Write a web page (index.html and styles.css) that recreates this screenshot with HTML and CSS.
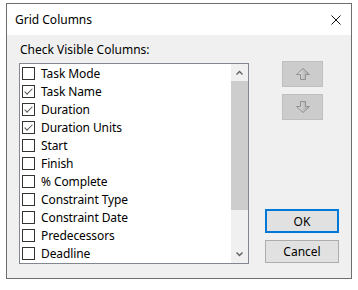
FILE: index.html
```html
<!DOCTYPE html>
<html lang="en">
<head>
    <meta charset="UTF-8">
    <title>Grid Columns</title>
    <link rel="stylesheet" href="styles.css">
</head>
<body>
    <div class="window">
        <div class="titlebar">
            <span class="title">Grid Columns</span>
            <svg class="close" width="10" height="10" viewBox="0 0 10 10">
                <path d="M0.5 0.5 L9.5 9.5 M9.5 0.5 L0.5 9.5" stroke="#111" stroke-width="1" fill="none"/>
            </svg>
        </div>
        <div class="content">
            <div class="left">
                <div class="label">Check Visible Columns:</div>
                <div class="listbox">
                    <ul class="items">
                        <li><span class="cb"></span>Task Mode</li>
                        <li><span class="cb checked"></span>Task Name</li>
                        <li><span class="cb checked"></span>Duration</li>
                        <li><span class="cb checked"></span>Duration Units</li>
                        <li><span class="cb"></span>Start</li>
                        <li><span class="cb"></span>Finish</li>
                        <li><span class="cb"></span>% Complete</li>
                        <li><span class="cb"></span>Constraint Type</li>
                        <li><span class="cb"></span>Constraint Date</li>
                        <li><span class="cb"></span>Predecessors</li>
                        <li><span class="cb"></span>Deadline</li>
                    </ul>
                    <div class="scrollbar">
                        <div class="sb-arrow">
                            <svg width="7" height="5" viewBox="0 0 7 5"><path d="M0.5 4.5 L3.5 1.5 L6.5 4.5" stroke="#606060" stroke-width="1.4" fill="none"/></svg>
                        </div>
                        <div class="sb-thumb"></div>
                        <div class="sb-track"></div>
                        <div class="sb-arrow">
                            <svg width="7" height="5" viewBox="0 0 7 5"><path d="M0.5 0.5 L3.5 3.5 L6.5 0.5" stroke="#606060" stroke-width="1.4" fill="none"/></svg>
                        </div>
                    </div>
                </div>
            </div>
            <div class="right">
                <div class="move-btn">
                    <svg width="14" height="12" viewBox="0 0 14 12">
                        <defs>
                            <linearGradient id="upfill" x1="0" y1="0" x2="1" y2="0">
                                <stop offset="0" stop-color="#e4e4e4"/>
                                <stop offset="1" stop-color="#a6a6a6"/>
                            </linearGradient>
                        </defs>
                        <path d="M7 0.5 L13.5 6.5 L9.5 6.5 L9.5 11.5 L4.5 11.5 L4.5 6.5 L0.5 6.5 Z" fill="url(#upfill)" stroke="#909090"/>
                    </svg>
                </div>
                <div class="move-btn down">
                    <svg width="14" height="12" viewBox="0 0 14 12">
                        <path d="M7 11.5 L13.5 5.5 L9.5 5.5 L9.5 0.5 L4.5 0.5 L4.5 5.5 L0.5 5.5 Z" fill="url(#upfill)" stroke="#909090"/>
                    </svg>
                </div>
                <div class="btn ok">OK</div>
                <div class="btn cancel">Cancel</div>
            </div>
        </div>
    </div>
</body>
</html>
```

FILE: styles.css
```css
body {
    margin: 0;
    background-color: #ffffff;
    font-family: "Noto Sans", "Open Sans", sans-serif;
    font-size: 12px;
    color: #000;
}
.window {
    margin: 3px 0 0 6px;
    width: 344px;
    border: 1px solid #6e6e6e;
    background-color: #f0f0f0;
}
.titlebar {
    height: 31px;
    background-color: #ffffff;
    display: flex;
    align-items: center;
    justify-content: space-between;
    padding: 0 10px 0 8px;
}
.title {
    line-height: 16px;
}
.content {
    display: flex;
    padding: 7px 12px 14px 12px;
}
.left {
    display: flex;
    flex-direction: column;
}
.label {
    height: 16px;
    line-height: 16px;
    margin-bottom: 5px;
    padding-left: 1px;
}
.listbox {
    width: 228px;
    height: 199px;
    border: 1px solid #828790;
    background-color: #fff;
    display: flex;
    overflow: hidden;
}
.items {
    list-style: none;
    margin: 0;
    padding: 0 0 0 2px;
    flex: 1;
}
.items li {
    height: 18px;
    display: flex;
    align-items: center;
    white-space: nowrap;
    letter-spacing: -0.1px;
}
.cb {
    width: 11px;
    height: 11px;
    border: 1px solid #333;
    background-color: #fff;
    margin-right: 6px;
    flex: none;
    position: relative;
}
.cb.checked::after {
    content: "";
    position: absolute;
    left: 1px;
    top: 0px;
    width: 7px;
    height: 3px;
    border-left: 1px solid #555;
    border-bottom: 1px solid #555;
    transform: translate(0.5px, 2.5px) rotate(-45deg);
}
.scrollbar {
    width: 17px;
    display: flex;
    flex-direction: column;
    background-color: #f0f0f0;
}
.sb-arrow {
    height: 17px;
    display: flex;
    align-items: center;
    justify-content: center;
}
.sb-thumb {
    height: 129px;
    background-color: #cdcdcd;
}
.sb-track {
    flex: 1;
}
.right {
    display: flex;
    flex-direction: column;
    margin-left: 16px;
    padding-top: 19px;
    width: 74px;
}
.move-btn {
    width: 39px;
    height: 24px;
    margin-left: 17px;
    background-color: #cccccc;
    border: 1px solid #bfbfbf;
    display: flex;
    align-items: center;
    justify-content: center;
}
.move-btn.down {
    margin-top: 7px;
}
.btn {
    box-sizing: border-box;
    width: 74px;
    background-color: #e1e1e1;
    display: flex;
    align-items: center;
    justify-content: center;
}
.ok {
    margin-top: auto;
    height: 24px;
    border: 2px solid #0078d7;
}
.cancel {
    margin-top: 7px;
    margin-bottom: 1px;
    height: 23px;
    border: 1px solid #adadad;
}
```
